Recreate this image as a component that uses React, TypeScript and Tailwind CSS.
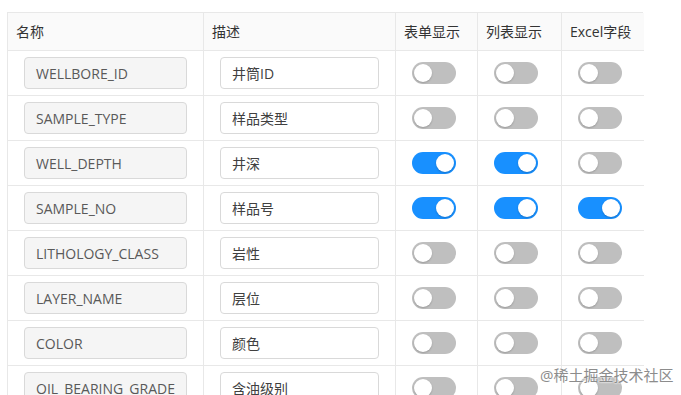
const rows = [
  { name: "WELLBORE_ID", desc: "井筒ID", form: false, list: false, excel: false },
  { name: "SAMPLE_TYPE", desc: "样品类型", form: false, list: false, excel: false },
  { name: "WELL_DEPTH", desc: "井深", form: true, list: true, excel: false },
  { name: "SAMPLE_NO", desc: "样品号", form: true, list: true, excel: true },
  { name: "LITHOLOGY_CLASS", desc: "岩性", form: false, list: false, excel: false },
  { name: "LAYER_NAME", desc: "层位", form: false, list: false, excel: false },
  { name: "COLOR", desc: "颜色", form: false, list: false, excel: false },
  { name: "OIL_BEARING_GRADE", desc: "含油级别", form: false, list: false, excel: false },
];

function Toggle({ on }: { on: boolean }) {
  return (
    <div
      className={`relative w-[44px] h-[22px] rounded-full ${on ? "bg-[#1890ff]" : "bg-[#bfbfbf]"}`}
    >
      <div
        className={`absolute top-[2px] w-[18px] h-[18px] rounded-full bg-white shadow-[0_1px_2px_rgba(0,0,0,0.2)] ${
          on ? "left-[24px]" : "left-[2px]"
        }`}
      />
    </div>
  );
}

export default function App() {
  const headCell = "h-[38px] px-2 flex items-center border-r border-b border-[#e8e8e8] bg-[#fafafa] text-[#333]";
  const headLast = "h-[38px] px-2 flex items-center border-b border-[#e8e8e8] bg-[#fafafa] text-[#333]";
  const bodyCell = "h-[45px] px-4 flex items-center border-r border-b border-[#e8e8e8]";
  const bodyLast = "h-[45px] px-4 flex items-center border-b border-[#e8e8e8]";

  return (
    <div
      className="relative w-[681px] h-[395px] overflow-hidden bg-white text-[14px]"
      style={{ fontFamily: '"Open Sans", "Noto Sans CJK SC", sans-serif' }}
    >
      <div className="ml-[7px] mt-[12px] w-[636px] border-l border-t border-[#e8e8e8] grid grid-cols-[196px_192px_82px_84px_82px]">
        <div className={headCell}>名称</div>
        <div className={headCell}>描述</div>
        <div className={headCell}>表单显示</div>
        <div className={headCell}>列表显示</div>
        <div className={headLast}>Excel字段</div>

        {rows.map((r) => (
          <div key={r.name} className="contents">
            <div className={bodyCell}>
              <div className="w-full h-[32px] px-[11px] flex items-center rounded-[4px] border border-[#d9d9d9] bg-[#f5f5f5] text-[#595959]">
                {r.name}
              </div>
            </div>
            <div className={bodyCell}>
              <div className="w-full h-[32px] px-[11px] flex items-center rounded-[4px] border border-[#d9d9d9] bg-white text-[#404040]">
                {r.desc}
              </div>
            </div>
            <div className={bodyCell}>
              <Toggle on={r.form} />
            </div>
            <div className={bodyCell}>
              <Toggle on={r.list} />
            </div>
            <div className={bodyLast}>
              <Toggle on={r.excel} />
            </div>
          </div>
        ))}
      </div>

      <div className="absolute left-[540px] top-[364px] text-[15px] text-[#8c8c8c] [text-shadow:0_0_2px_#fff,0_0_2px_#fff]">
        @稀土掘金技术社区
      </div>
    </div>
  );
}
